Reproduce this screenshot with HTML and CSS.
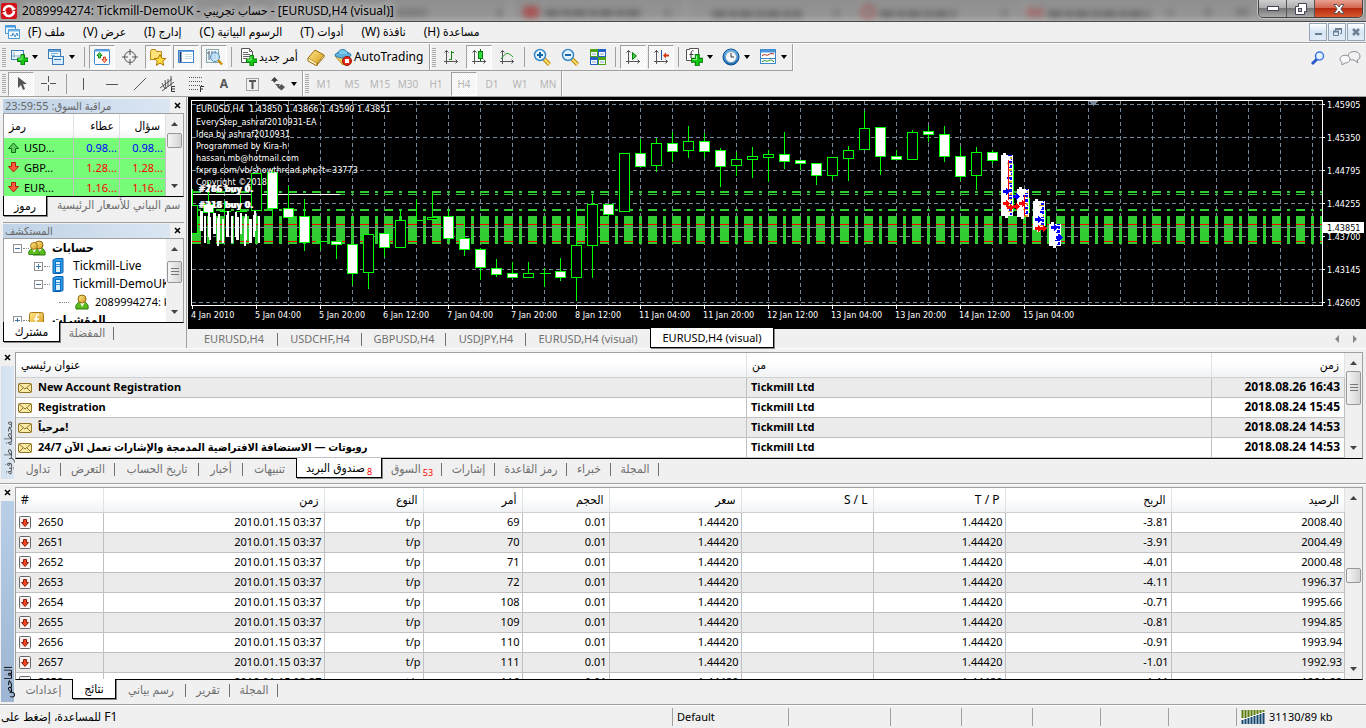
FILE: index.html
```html
<!DOCTYPE html>
<html lang="ar" dir="ltr">
<head>
<meta charset="utf-8">
<title>2089994274: Tickmill-DemoUK</title>
<link rel="stylesheet" href="styles.css">
</head>
<body>
<svg class="defs" width="0" height="0" aria-hidden="true">
  <defs>
    <linearGradient id="gold" x1="0" y1="0" x2="1" y2="1"><stop offset="0" stop-color="#ffe98a"/><stop offset="1" stop-color="#d59a1c"/></linearGradient>
    <linearGradient id="blue" x1="0" y1="0" x2="0" y2="1"><stop offset="0" stop-color="#6fbcf0"/><stop offset="1" stop-color="#1265b4"/></linearGradient>
    <symbol id="plus" viewBox="0 0 11 11"><path d="M4 .5h3.500v3.500h3.500v3.500H7.500v3.500H4V7.500H.5V4H4z" fill="#17c817" stroke="#077a0b"/><path d="M5 1.500v3.500H1.500" fill="none" stroke="#8df58d"/></symbol>
    <symbol id="axes" viewBox="0 0 18 18"><path d="M4.500 2v14M2 13.500h14M2.500 4.500l2-2 2 2M13.500 11.500l2 2-2 2" fill="none" stroke="#555"/></symbol>
    <symbol id="mail" viewBox="0 0 14 10"><rect x=".5" y=".5" width="13" height="9" rx="1" fill="#fbe9a6" stroke="#8f7426"/><path d="M1 1l6 5 6-5M1 9l4-4M13 9L9 5" fill="none" stroke="#8f7426"/></symbol>
    <symbol id="fall" viewBox="0 0 13 14"><rect x=".5" y=".5" width="11" height="12" rx="1" fill="#f6f3f2" stroke="#666"/><path d="M4.500 3.500h3v3h2L6 10.500 2.500 6.500h2z" fill="#f0421c" stroke="#8c1c06"/></symbol>
    <symbol id="down" viewBox="0 0 11 11"><path d="M3.500 .5h4v4h3l-5 5.500-5-5.500h3z" fill="#ff5a3a" stroke="#b71c10"/></symbol>
    <symbol id="up" viewBox="0 0 11 11"><path d="M3.500 10.500h4v-4h3l-5-5.500-5 5.500h3z" fill="#5ccf5c" stroke="#0c6b16"/></symbol>
    <symbol id="server" viewBox="0 0 12 16"><path d="M1 2l3-1.500h7v14L8 15.500H1z" fill="#2b9de8" stroke="#0e5fae"/><rect x="3.500" y="3.500" width="5" height="11" fill="#d8f0ff" stroke="#0e6fc0"/><path d="M4 6.500h4M4 8.500h4" stroke="#2b8ed8"/></symbol>
    <symbol id="user" viewBox="0 0 14 16"><path d="M1 15c-1-5 2-7 6-7s7 2 6 7z" fill="#5cbc1e" stroke="#2c7a08"/><path d="M5 8l2 5 3-5z" fill="#fff"/><circle cx="7" cy="5" r="4" fill="url(#gold)" stroke="#94680c"/></symbol>
    <symbol id="chevup" viewBox="0 0 7 4"><path d="M0 4l3.500-4L7 4z" fill="#444"/></symbol>
    <symbol id="chevdown" viewBox="0 0 7 4"><path d="M0 0l3.500 4L7 0z" fill="#444"/></symbol>
    <symbol id="x" viewBox="0 0 7 7"><path d="M1 1l5 5M6 1L1 6" stroke="#000" stroke-width="1.500"/></symbol>
  </defs>
</svg>

<header class="titlebar">
  <svg class="backdrop" width="100%" height="21" aria-hidden="true">
    <g class="soft">
      <rect x="382" y="9" width="45" height="7" fill="#686868"/>
      <path d="M510 0v20M686 0v20M862 0v20M1026 0v20" stroke="#aaa" stroke-width="3"/>
      <rect x="523" y="6" width="16" height="12" rx="4" fill="#b52a2a"/>
      <path d="M545 13h95M712 14h90M880 14h76M1048 14h102" stroke="#454545" stroke-width="6" stroke-dasharray="14 3 8 2"/>
      <path d="M497 13h5M665 13h5M834 13h5M1002 13h5M1168 13h5M1205 12h6M1236 12h12" stroke="#555" stroke-width="5"/>
      <circle cx="868" cy="12" r="6" fill="none" stroke="#a73232" stroke-width="3"/>
      <path d="M1029 8v9M1035 8v9M1041 8v9" stroke="#b03c3c" stroke-width="4"/>
    </g>
  </svg>
  <svg class="logo" width="16" height="16" viewBox="0 0 16 16"><rect width="16" height="16" rx="2" fill="#d31018"/><path d="M3 8a5 5 0 0 1 9-3M13 8a5 5 0 0 1-9 3" fill="none" stroke="#fff" stroke-width="2.500"/><path d="M10 2l5 4-4 2zM6 14L1 10l4-2z" fill="#fff"/></svg>
  <h1 class="caption">2089994274: Tickmill-DemoUK - حساب تجريبي - [EURUSD,H4 (visual)]</h1>
  <div class="winbtns">
    <button class="wb" aria-label="تصغير"><svg width="12" height="5"><rect x=".5" y=".5" width="11" height="4" fill="#fff" stroke="#445"/></svg></button>
    <button class="wb" aria-label="استعادة"><svg width="12" height="12"><path d="M3.500 .5h8v8h-2v3h-9v-8h3z" fill="#fff" stroke="#445"/><rect x="3.500" y="5.500" width="3" height="3" fill="#bbb" stroke="#445"/></svg></button>
    <button class="wb wclose" aria-label="إغلاق"><svg width="12" height="10"><path d="M1 .5h3l2 2.500 2-2.500h3L7.800 5 11 9.500H8L6 7 4 9.500H1L4.200 5z" fill="#fff" stroke="#555"/></svg></button>
  </div>
</header>

<nav class="menubar">
  <svg width="15" height="15" viewBox="0 0 15 15"><path d="M.5 .5h10v8h-10z" fill="#eaf6ff" stroke="#4a9ad8"/><path d="M1 1.500h9" stroke="#4a9ad8" stroke-width="2"/><path d="M3.500 4.500h11v9h-11z" fill="#f8fcff" stroke="#4a9ad8"/><path d="M4 5.500h10" stroke="#72b6e8" stroke-width="2"/><path d="M5 10l2 1 1-3 2 4 2-4 1 3" fill="none" stroke="#3c8ccc"/></svg>
  <div class="menus">
    <button dir="rtl">ملف (F)</button><button dir="rtl">عرض (V)</button><button dir="rtl">إدارج (I)</button><button dir="rtl">الرسوم البيانية (C)</button><button dir="rtl">أدوات (T)</button><button dir="rtl">نافذة (W)</button><button dir="rtl">مساعدة (H)</button>
  </div>
  <div class="mdi">
    <button aria-label="تصغير"><svg width="7" height="8"><path d="M0 6h7" stroke="#6c8092" stroke-width="2"/></svg></button>
    <button aria-label="استعادة"><svg width="9" height="8"><path d="M2.500 3V1.500h6v4H7M.5 3.500h5v4h-5z" fill="none" stroke="#6c8092"/><path d="M2 1h7M0 3.500h6" stroke="#6c8092" stroke-width="2"/></svg></button>
    <button aria-label="إغلاق"><svg width="8" height="8"><path d="M1 1l6 6M7 1L1 7" stroke="#6c8092" stroke-width="2.500"/></svg></button>
  </div>
</nav>

<div class="tools">
  <div class="toolrow">
    <div class="group">
      <i class="grip"></i>
      <button class="dd" aria-label="رسم جديد"><svg width="18" height="18"><rect x="1.500" y="2.500" width="12" height="9" fill="#f2f9ff" stroke="#3a7cba"/><path d="M4 4v6M2 8h9" stroke="#8ab"/><use href="#plus" x="7" y="6" width="11" height="11"/></svg><i class="arr"></i></button>
      <button class="dd" aria-label="قوالب"><svg width="18" height="18"><rect x="1.500" y="1.500" width="12" height="9" fill="#eaf5ff" stroke="#3a7cba"/><path d="M2 3h11" stroke="#6aa4d8" stroke-width="2"/><path d="M4 5.500h7M4 7.500h4" stroke="#7fb2dc"/><rect x="5.500" y="8.500" width="11" height="8" fill="#d5ecff" stroke="#3a7cba"/><path d="M7 11.500h7" stroke="#3a7cba"/></svg><i class="arr"></i></button>
      <i class="sep"></i>
      <button class="tb on" aria-label="مراقبة السوق"><svg width="18" height="18"><rect x="1.500" y="1.500" width="15" height="15" rx="1" fill="#fff" stroke="#3c86cc"/><path d="M2 2.500h14" stroke="#5aa4e4" stroke-width="2"/><path d="M6.500 4.500l2.500 3H7.500v2.500h-2V7.500H4z" fill="#5ccf5c" stroke="#0c8b16"/><path d="M11.500 14.500l-2.500-3h1.500V9h2v2.500H14z" fill="#ffb08a" stroke="#e0401c"/></svg></button>
      <button class="tb" aria-label="نافذة البيانات"><svg width="18" height="18"><circle cx="9" cy="9" r="5.500" fill="none" stroke="#555"/><path d="M9 1v6M9 11v6M1 9h6M11 9h6" stroke="#555"/></svg></button>
      <button class="tb on" aria-label="المستكشف"><svg width="18" height="18"><path d="M1.500 3.500l1-2h4l1 2h5v8h-11z" fill="#ffe27a" stroke="#b98a12"/><path d="M11 6.500l1.800 3.700 4 .4-3 2.700 1 4-3.800-2.200-3.700 2.200 1-4-3-2.700 4-.4z" fill="#ffdc3c" stroke="#b07806"/></svg></button>
      <button class="tb on" aria-label="محطة طرفية"><svg width="18" height="18"><rect x="1.500" y="2.500" width="15" height="12" fill="#fff" stroke="#3f83c8"/><path d="M2 3.500h14" stroke="#6aace8"/><path d="M3.500 4v10" stroke="#123c78" stroke-width="2"/><path d="M8 6.500h7M8 8.500h7M8 10.500h7" stroke="#cdd"/></svg></button>
      <button class="tb on" aria-label="اختبار"><svg width="18" height="18"><rect x="1.500" y="1.500" width="12" height="13" fill="#eef4f8" stroke="#8aa"/><path d="M4 3v9M2 5h3M7 3v8M10 3v8" stroke="#567"/><circle cx="10" cy="9" r="4.500" fill="#bfe2fa" fill-opacity=".8" stroke="#4b90c4"/><path d="M13 12l4 4.500" stroke="#c8920c" stroke-width="2.500"/></svg></button>
      <i class="sep"></i>
      <button class="tb wide"><svg width="18" height="18"><path d="M2.500 .5h8l3 3v11h-11z" fill="#fff" stroke="#555"/><path d="M10.500 .5v3h3M4 4.500h5M4 6.500h7M4 8.500h7M4 10.500h4" fill="none" stroke="#666"/><use href="#plus" x="7" y="7" width="11" height="11"/></svg><span dir="rtl">أمر جديد</span></button>
      <button class="tb" aria-label="محرر"><svg width="18" height="18"><path d="M1 10l7-8 9 5-7 9z" fill="url(#gold)" stroke="#9c6a08"/><path d="M1 10v3l9 5v-2M10 17l7-8V7" fill="#fff3c2" stroke="#9c6a08"/></svg></button>
      <button class="tb wide"><svg width="18" height="18"><path d="M1 8l8 9 7-9z" fill="url(#gold)" stroke="#b98a12"/><ellipse cx="9" cy="7" rx="8" ry="3" fill="#5fb2dc" stroke="#2a7cae"/><path d="M4 6c0-6 9-6 10 0" fill="#7cc8ec" stroke="#2a7cae"/><circle cx="13" cy="13" r="4.500" fill="#e02a12" stroke="#a01206"/><rect x="11" y="11" width="4" height="4" fill="#fff"/></svg><span>AutoTrading</span></button>
    </div>
    <div class="group">
      <i class="grip"></i>
      <button class="tb" aria-label="أعمدة"><svg width="18" height="18"><use href="#axes" width="18" height="18"/><path d="M9.500 3v9M7 11.500h2.500M9.500 4.500H12" stroke="#128a12"/></svg></button>
      <button class="tb on" aria-label="شموع"><svg width="18" height="18"><use href="#axes" width="18" height="18"/><path d="M10.500 1v12" stroke="#0a6a0a"/><rect x="8.500" y="3.500" width="4" height="7" fill="#2edc3e" stroke="#0a7a0a"/></svg></button>
      <button class="tb" aria-label="خط"><svg width="18" height="18"><use href="#axes" width="18" height="18"/><path d="M3 11c5-7 7-7 12-2" fill="none" stroke="#1a9a1a"/></svg></button>
      <i class="sep"></i>
      <button class="tb" aria-label="تكبير"><svg width="18" height="18"><path d="M11 11l5.500 5.500" stroke="#b8860c" stroke-width="4"/><path d="M11 11l5.500 5.500" stroke="#ffe06a" stroke-width="2"/><circle cx="7" cy="7" r="5.500" fill="#e4f4ff" stroke="#3a88c4" stroke-width="1.500"/><path d="M4 7h6M7 4v6" stroke="#1466a8" stroke-width="2"/></svg></button>
      <button class="tb" aria-label="تصغير"><svg width="18" height="18"><path d="M11 11l5.500 5.500" stroke="#b8860c" stroke-width="4"/><path d="M11 11l5.500 5.500" stroke="#ffe06a" stroke-width="2"/><circle cx="7" cy="7" r="5.500" fill="#e4f4ff" stroke="#3a88c4" stroke-width="1.500"/><path d="M4 7h6" stroke="#1466a8" stroke-width="2"/></svg></button>
      <button class="tb" aria-label="ترتيب"><svg width="18" height="18"><path d="M1 1h8v8H1zM9 9h8v8H9z" fill="#4aa414"/><path d="M9 1h8v8H9zM1 9h8v8H1z" fill="#2462c8"/><path d="M2 4h6v4H2zM10 4h6v4h-6zM2 12h6v4H2zM10 12h6v4h-6z" fill="#f4faff"/><path d="M3 6h4M11 6h4M3 14h4M11 14h4" stroke="#8fa8b8"/></svg></button>
      <i class="sep"></i>
      <button class="tb on" aria-label="تمرير"><svg width="18" height="18"><use href="#axes" width="18" height="18"/><path d="M8.500 4.500v7l4-3.500z" fill="#33d043" stroke="#0a7a0a"/></svg></button>
      <button class="tb on" aria-label="إزاحة"><svg width="18" height="18"><use href="#axes" width="18" height="18"/><path d="M9.500 2v10" stroke="#225c9c"/><path d="M11 7.500l3-3v2h3v2h-3v2z" fill="#d8340c"/></svg></button>
      <i class="sep"></i>
      <button class="dd" aria-label="مؤشرات"><svg width="18" height="18"><path d="M1.500 1.500h3v-1h9v12h-12z" fill="#fff" stroke="#555"/><path d="M8.500 3C6 2 6 4 6 10M4.500 6.500h4" fill="none" stroke="#333"/><use href="#plus" x="6" y="6" width="12" height="12"/></svg><i class="arr"></i></button>
      <button class="dd" aria-label="فترات"><svg width="18" height="18"><circle cx="9" cy="9" r="8" fill="url(#blue)" stroke="#0e4f94"/><circle cx="9" cy="9" r="5.500" fill="#f4f8fc" stroke="#8ab"/><path d="M9 5v4h3" fill="none" stroke="#333"/></svg><i class="arr"></i></button>
      <button class="dd" aria-label="نماذج"><svg width="18" height="18"><rect x="1.500" y="1.500" width="15" height="14" fill="#fff" stroke="#3c86cc"/><path d="M2 3h14" stroke="#4a94d8" stroke-width="3"/><path d="M2 10.500h14" stroke="#3c86cc"/><path d="M3 8c3-3 4 0 6-1s3-2 6-1" fill="none" stroke="#a02010"/><path d="M3 14c3-3 4 0 6-1s3-2 6 1" fill="none" stroke="#128a12"/></svg><i class="arr"></i></button>
    </div>
    <div class="right">
      <svg width="16" height="16"><path d="M2 14l5-5" stroke="#2b58c8" stroke-width="3"/><circle cx="9.500" cy="6" r="4" fill="#e8f4ff" stroke="#3a74e0" stroke-width="1.500"/></svg>
      <svg width="22" height="16"><path d="M9 6c0-6 12-6 12 0 0 3-2 4-3 4l1 3-4-3c-4 0-6-1-6-4z" fill="#f2f2f4" stroke="#909098"/><path d="M1 9c0-5 10-5 10 0 0 3-3 4-5 4l-3 2 0-3c-1 0-2-1-2-3z" fill="#f8f8fa" stroke="#909098"/></svg>
    </div>
  </div>
  <div class="toolrow second">
    <div class="group">
      <i class="grip"></i>
      <button class="tb on" aria-label="مؤشر"><svg width="18" height="18"><path d="M6 2v11l3-3 2 5 2-1-2-5h4z" fill="#555"/></svg></button>
      <button class="tb" aria-label="تقاطع"><svg width="18" height="18"><path d="M8.500 1v6M8.500 10v6M1 8.500h6M10 8.500h6" stroke="#555"/></svg></button>
      <i class="sep"></i>
      <button class="tb" aria-label="خط عمودي"><svg width="18" height="18"><path d="M8.500 3v12" stroke="#555"/></svg></button>
      <button class="tb" aria-label="خط أفقي"><svg width="18" height="18"><path d="M3 9.500h12" stroke="#555"/></svg></button>
      <button class="tb" aria-label="خط اتجاه"><svg width="18" height="18"><path d="M3 15L15 3" stroke="#555"/></svg></button>
      <button class="tb" aria-label="قناة"><svg width="18" height="18"><path d="M1 13L13 4M3 16L15 7M3 8l3 6M6 5l1 9M9 4v8M12 1v10" stroke="#555"/><path d="M16 11.500h-3.500v5H16M12.500 14H16" fill="none" stroke="#333"/></svg></button>
      <button class="tb" aria-label="فيبوناتشي"><svg width="18" height="18"><path d="M2 2.500h13M2 6.500h13M2 10.500h13M2 14.500h9" stroke="#555" stroke-dasharray="1 1"/><path d="M13.500 17v-5.500H17M13.500 14H16" fill="none" stroke="#333"/></svg></button>
      <button class="tb letter">A</button>
      <button class="tb" aria-label="تسمية"><svg width="18" height="18"><rect x="3.500" y="3.500" width="12" height="12" fill="none" stroke="#555" stroke-dasharray="1 1"/><path d="M6 6h7M9.500 6v8" stroke="#555" stroke-width="2"/></svg></button>
      <button class="dd" aria-label="أسهم"><svg width="18" height="18"><path d="M5.500 2L9 5.500 7 6l-1.500 2L4 6 2 5.500z" fill="#444"/><path d="M8 12l3-1.500L12.500 9l1.500 1.500 2 1.500-3.500 3.500zM6 9l3 3 2-3" fill="#555"/></svg><i class="arr"></i></button>
    </div>
    <div class="group frames">
      <i class="grip"></i>
      <button class="tb">M1</button><button class="tb">M5</button><button class="tb">M15</button><button class="tb">M30</button><button class="tb">H1</button><button class="tb on">H4</button><button class="tb">D1</button><button class="tb">W1</button><button class="tb">MN</button>
    </div>
  </div>
</div>

<main class="workspace">
  <aside class="left">
    <section class="pane">
      <div class="pane-title"><h2 dir="rtl">مراقبة السوق: 23:59:55</h2><button class="close" aria-label="إغلاق"><svg width="7" height="7"><use href="#x"/></svg></button></div>
      <div class="pane-body watch">
        <table class="quotes">
          <colgroup><col class="q1"><col class="q2"><col class="q2"></colgroup>
          <thead><tr><th class="start">رمز</th><th>عطاء</th><th>سؤال</th></tr></thead>
          <tbody>
            <tr class="rise"><td><svg width="11" height="11"><use href="#up"/></svg>USD...</td><td>0.98...</td><td>0.98...</td></tr>
            <tr class="drop"><td><svg width="11" height="11"><use href="#down"/></svg>GBP...</td><td>1.28...</td><td>1.28...</td></tr>
            <tr class="drop"><td><svg width="11" height="11"><use href="#down"/></svg>EUR...</td><td>1.16...</td><td>1.16...</td></tr>
          </tbody>
        </table>
        <div class="scroll"><svg width="7" height="4"><use href="#chevup"/></svg><i class="thumb t1"></i><svg class="end" width="7" height="4"><use href="#chevdown"/></svg></div>
      </div>
      <div class="tabs"><button class="tab active w44">رموز</button><button class="tab last clip" dir="rtl">سم البياني للأسعار الرئيسية</button></div>
    </section>
    <section class="pane nav">
      <div class="pane-title"><h2>المستكشف</h2><button class="close" aria-label="إغلاق"><svg width="7" height="7"><use href="#x"/></svg></button></div>
      <div class="pane-body treebox">
        <ul class="tree">
          <li class="l0"><i class="box minus"></i><svg width="18" height="16"><use href="#user" x="4" width="14" height="16"/><use href="#user" x="0" y="1" width="12" height="15"/></svg><b>حسابات</b></li>
          <li class="l1"><i class="box"></i><svg width="12" height="16"><use href="#server"/></svg><span>Tickmill-Live</span></li>
          <li class="l1"><i class="box minus"></i><svg width="12" height="16"><use href="#server"/></svg><span>Tickmill-DemoUK</span></li>
          <li class="l2"><i class="dots"></i><svg width="14" height="16"><use href="#user"/></svg><span>2089994274: k</span></li>
          <li class="l0"><i class="box"></i><svg width="18" height="16"><rect x="1.500" y=".5" width="14" height="14" rx="2" fill="url(#gold)" stroke="#a87a18"/><path d="M11 3c-3-1-3 1-3 9M6 7h5" fill="none" stroke="#fff" stroke-width="1.500"/></svg><b>المؤشرات</b></li>
        </ul>
        <div class="scroll"><svg width="7" height="4"><use href="#chevup"/></svg><i class="thumb t2"></i><svg class="end" width="7" height="4"><use href="#chevdown"/></svg></div>
      </div>
      <div class="tabs"><button class="tab active w57">مشترك</button><button class="tab w54">المفضلة</button></div>
    </section>
  </aside>
  <section class="charts">
    <svg id="chart" viewBox="0 1 1178 231" preserveAspectRatio="xMinYMin meet" role="img" aria-label="EURUSD,H4"></svg>
    <div class="tabs chart-tabs">
      <button class="tab c1">EURUSD,H4</button><button class="tab c2">USDCHF,H4</button><button class="tab c2">GBPUSD,H4</button><button class="tab c3">USDJPY,H4</button><button class="tab c4 nosep">EURUSD,H4 (visual)</button><button class="tab active c4">EURUSD,H4 (visual)</button>
      <div class="nudge"><svg width="22" height="8"><path d="M4 0v8L0 4zM18 0v8l4-4z" fill="#888"/></svg></div>
    </div>
  </section>
</main>

<section class="dock mail">
  <div class="strip"><button class="close" aria-label="إغلاق"><svg width="7" height="7"><use href="#x"/></svg></button><h2 class="vert pale"><span>محطة طرفية</span></h2></div>
  <div class="dock-main">
    <div class="dock-body mailbody">
      <table class="grid letters">
        <colgroup><col><col class="m2"><col class="m3"></colgroup>
        <thead><tr><th>عنوان رئيسي</th><th>من</th><th class="r">زمن</th></tr></thead>
        <tbody>
          <tr><td><svg width="14" height="10"><use href="#mail"/></svg>New Account Registration</td><td>Tickmill Ltd</td><td class="r">2018.08.26 16:43</td></tr>
          <tr><td><svg width="14" height="10"><use href="#mail"/></svg>Registration</td><td>Tickmill Ltd</td><td class="r">2018.08.24 15:45</td></tr>
          <tr><td><svg width="14" height="10"><use href="#mail"/></svg>مرحباً!</td><td>Tickmill Ltd</td><td class="r">2018.08.24 14:53</td></tr>
          <tr><td><svg width="14" height="10"><use href="#mail"/></svg><bdi dir="rtl">روبوتات — الاستضافة الافتراضية المدمجة والإشارات تعمل الآن 24/7</bdi></td><td>Tickmill Ltd</td><td class="r">2018.08.24 14:53</td></tr>
        </tbody>
      </table>
      <div class="scroll"><svg width="7" height="4"><use href="#chevup"/></svg><i class="thumb t3"></i><svg class="end" width="7" height="4"><use href="#chevdown"/></svg></div>
    </div>
    <div class="tabs">
      <button class="tab w46">تداول</button><button class="tab w54">التعرض</button><button class="tab w84">تاريخ الحساب</button><button class="tab w44">أخبار</button><button class="tab w53 nosep">تنبيهات</button><button class="tab active w86">صندوق البريد<sub>8</sub></button><button class="tab w60">السوق<sub>53</sub></button><button class="tab w53">إشارات</button><button class="tab w72">رمز القاعدة</button><button class="tab w44">خبراء</button><button class="tab w48">المجلة</button>
    </div>
  </div>
</section>

<section class="dock tester">
  <div class="strip"><button class="close" aria-label="إغلاق"><svg width="7" height="7"><use href="#x"/></svg></button><h2 class="vert deep"><span>الفاحص</span></h2></div>
  <div class="dock-main">
    <div class="dock-body testbody">
      <table class="grid results">
        <colgroup><col class="r1"><col class="r2"><col class="r3"><col class="r3"><col class="r4"><col class="r5"><col class="r5"><col class="r5"><col class="r6"><col></colgroup>
        <thead><tr><th>#</th><th class="r">زمن</th><th class="r">النوع</th><th class="r">أمر</th><th class="r">الحجم</th><th class="r">سعر</th><th class="r">S / L</th><th class="r">T / P</th><th class="r">الربح</th><th class="r">الرصيد</th></tr></thead>
        <tbody id="results"></tbody>
      </table>
      <div class="scroll"><svg width="7" height="4"><use href="#chevup"/></svg><i class="thumb t4"></i><svg class="end" width="7" height="4"><use href="#chevdown"/></svg></div>
    </div>
    <div class="tabs">
      <button class="tab w57 nosep">إعدادات</button><button class="tab active w44">نتائج</button><button class="tab w70">رسم بياني</button><button class="tab w44">تقرير</button><button class="tab w48">المجلة</button>
    </div>
  </div>
</section>

<footer class="status">
  <span class="cell help"><bdi dir="rtl">F1 للمساعدة، إضغط على</bdi></span>
  <span class="cell profile">Default</span>
  <span class="cell s1"></span><span class="cell s2"></span><span class="cell s2"></span><span class="cell s4"></span><span class="cell s4"></span><span class="cell s4"></span>
  <span class="cell traffic"><svg width="24" height="14"><path d="M1.500 0v8M4.500 0v8M7.500 0v7M10.500 0v6M13.500 0v5M16.500 0v4M19.500 0v3M22.500 0v2" stroke="#5c7f0c" stroke-width="2"/><path d="M1.500 10v4M4.500 9v5M7.500 8v6M10.500 7v7M13.500 6v8M16.500 5v9M19.500 4v10M22.500 3v11" stroke="#174a72" stroke-width="2"/></svg>31130/89 kb</span>
</footer>
<script src="app.js"></script>
</body>
</html>
```
FILE: styles.css
```css
* { box-sizing: border-box; }
body { margin: 0; min-height: 100vh; display: flex; flex-direction: column; background: #f0f0f0; color: #000; font: 12px/16px "Noto Sans", "DejaVu Sans Condensed", "DejaVu Sans", sans-serif; overflow: hidden; }
button { font: inherit; color: inherit; border: 0; padding: 0; margin: 0; background: none; white-space: nowrap; }
h1, h2, ul { margin: 0; padding: 0; font: inherit; list-style: none; }
svg { display: block; flex: none; }
.defs { position: absolute; }

.titlebar { position: relative; display: flex; align-items: center; height: 22px; padding-right: 3px; background: linear-gradient(#8f8f8f, #949494 70%, #a9a9a9); border-bottom: 1px solid #4a4a4a; overflow: hidden; }
.backdrop { position: absolute; inset: 0; }
.soft { filter: blur(3px); opacity: .6; }
.logo { position: relative; margin: 0 5px 0 1px; }
.caption { position: relative; flex: 1; white-space: nowrap; text-shadow: 0 0 8px #fff, 0 0 8px #ddd; }
.winbtns { position: relative; display: flex; align-self: flex-start; height: 18px; border: 1px solid #444; border-top: 0; border-radius: 0 0 5px 5px; box-shadow: 0 0 0 1px #c4c4c4; overflow: hidden; }
.wb { display: flex; justify-content: center; align-items: center; width: 28px; background: linear-gradient(#d0d0d0, #aaa 50%, #777 50%, #aaa); border-right: 1px solid #555; }
.wb.wclose { width: 47px; border-right: 0; background: linear-gradient(#e8a090, #d2604a 50%, #b52a10 50%, #d8582c); }

.menubar { display: flex; align-items: center; height: 21px; padding: 0 1px 0 5px; border-bottom: 1px solid #a0a0a0; font-size: 12px; }
.menus { display: flex; flex: 1; gap: 18px; padding-left: 8px; }
.mdi { display: flex; gap: 1px; }
.mdi button { display: flex; align-items: center; justify-content: center; width: 18px; height: 18px; border: 1px solid #93a6b8; background: linear-gradient(#fff, #d6e6f5 50%, #dfeaf6); }

.tools { border-bottom: 1px solid #a0a0a0; border-top: 1px solid #fff; }
.toolrow { display: flex; height: 27px; }
.toolrow.second { height: 25px; }
.group { display: flex; align-items: center; gap: 2px; padding-right: 3px; border-right: 1px solid #a0a0a0; border-bottom: 1px solid #a0a0a0; box-shadow: 1px 0 #fff; }
.group:nth-child(2) { padding-right: 0; }
.second .group { padding-right: 0; border-bottom: 0; }
.grip { width: 4px; height: 19px; margin: 0 0 0 2px; background: repeating-linear-gradient(#aaa 0 1px, #f0f0f0 1px 2px); }
.sep { width: 1px; height: 20px; margin: 0 2px; background: #a0a0a0; }
.tb { display: flex; align-items: center; justify-content: center; width: 26px; height: 24px; border: 1px solid transparent; }
.tb.wide { width: auto; gap: 2px; padding: 0 2px; }
.tb.on { border-color: #a0a0a0 #fff #fff #a0a0a0; background: repeating-conic-gradient(#fff 0 25%, #f0f0f0 0 50%) 0 0 / 2px 2px; }
.dd { display: flex; align-items: center; gap: 4px; width: 35px; padding-left: 2px; }
.arr { border: 3px solid transparent; border-top: 4px solid #000; border-bottom: 0; }
.frames { color: #b4b4b4; font-size: 10px; }
.letter { color: #555; font-weight: 700; font-size: 12px; }
.right { display: flex; align-items: center; gap: 13px; margin-left: auto; padding-right: 5px; }

.workspace { display: flex; height: 251px; }
.left { display: flex; flex-direction: column; width: 187px; padding: 1px 2px 0 3px; border-right: 1px solid #a0a0a0; }
.pane { display: flex; flex-direction: column; height: 125px; border-bottom: 1px solid #a0a0a0; }
.pane-title { display: flex; align-items: center; height: 15px; color: #666; font-size: 11px; }
.pane-title h2 { flex: 1; text-align: left; padding: 0 2px; line-height: 14px; background: linear-gradient(90deg, #bfd2e6, #dbe6f2); }
.close { display: flex; justify-content: center; width: 14px; }
.pane-body { display: flex; border: 1px solid #a0a0a0; border-bottom-color: #000; background: #fff; overflow: hidden; }
.watch { height: 84px; }
.quotes { flex: 1; table-layout: fixed; width: 100%; border-collapse: collapse; }
.quotes .q1 { width: 69px; }
.quotes .q2 { width: 46px; }
.quotes th { height: 24px; padding: 0 5px; text-align: right; font-weight: 400; border-right: 1px solid #e0e3e6; background: linear-gradient(#fff 60%, #f2f3f5); }
.quotes th.start { text-align: left; }
.quotes td { height: 20px; padding: 0 2px; text-align: right; font-size: 11px; white-space: nowrap; background: #76fc76; border-right: 1px solid #c0c0c0; border-bottom: 1px solid #c0c0c0; overflow: hidden; }
.quotes td:first-child { text-align: left; color: #000; padding-left: 4px; }
.quotes td svg { display: inline-block; vertical-align: -1px; margin-right: 5px; }
.rise { color: #00f; }
.drop { color: #f00; }
.scroll { position: relative; display: flex; flex-direction: column; align-items: center; width: 17px; padding: 8px 0; background: #f0f0f0; }
.scroll .end { margin-top: auto; }
.thumb { width: 15px; border: 1px solid #979797; border-radius: 2px; background: linear-gradient(90deg, #f5f5f5, #d4d4d6); }
.t1 { height: 15px; margin-top: 7px; }
.t2 { height: 22px; margin-top: 10px; }
.t3 { height: 34px; margin-top: 6px; }
.t4 { height: 15px; margin-top: 68px; }
.t2, .t3 { background: repeating-linear-gradient(#777 0 1px, transparent 1px 3px) center / 8px 8px no-repeat, linear-gradient(90deg, #f5f5f5, #d4d4d6); }
.tabs { display: flex; height: 20px; }
.tab { position: relative; height: 19px; text-align: center; color: #707070; overflow: visible; }
.tab::after { content: ""; position: absolute; right: 0; top: 4px; width: 1px; height: 13px; background: #707070; }
.tab.active::after, .tab.last::after, .tab.nosep::after { content: none; }
.tab.active { color: #000; background: #fff; border: 1px solid #000; border-top: 0; margin-top: -1px; height: 20px; box-shadow: 1px 1px #888; }
.tab sub { display: inline-block; unicode-bidi: isolate; font-size: 9px; line-height: 9px; color: #f00; vertical-align: -3px; margin-left: 2px; }
.tab.clip { flex: 1; min-width: 0; overflow: hidden; display: flex; justify-content: flex-end; padding-left: 10px; }
.w44 { width: 44px; } .w46 { width: 46px; } .w48 { width: 48px; } .w53 { width: 53px; } .w54 { width: 54px; } .w57 { width: 57px; } .w60 { width: 60px; } .w70 { width: 70px; } .w72 { width: 72px; } .w84 { width: 84px; } .w86 { width: 86px; }
.nav { border-bottom: 0; }
.treebox { height: 85px; }
.tree { flex: 1; overflow: hidden; white-space: nowrap; }
.tree li { display: flex; align-items: center; height: 18px; gap: 6px; }
.tree .l0 { padding-left: 9px; }
.tree .l1 { padding-left: 30px; gap: 9px; }
.tree .l2 { padding-left: 55px; font-size: 11px; }
.box { position: relative; flex: none; width: 9px; height: 9px; border: 1px solid #919191; background: linear-gradient(#47a, #47a) center / 5px 1px no-repeat, linear-gradient(#47a, #47a) center / 1px 5px no-repeat, #fff; }
.box.minus { background: linear-gradient(#47a, #47a) center / 5px 1px no-repeat, #fff; }
.box::after { content: ""; position: absolute; left: 9px; top: 3px; width: 6px; border-top: 1px dotted #888; }
.dots { flex: none; width: 10px; border-top: 1px dotted #888; }

.charts { flex: 1; min-width: 0; background: #000; margin-left: 1px; }
#chart { width: 100%; font: 9px "DejaVu Sans Condensed", "DejaVu Sans", sans-serif; shape-rendering: crispEdges; }
#chart text { white-space: pre; }
.chart-tabs { background: #f0f0f0; border-top: 1px solid #000; padding-left: 2px; font-size: 11px; }
.c1 { width: 88px; } .c2 { width: 84px; } .c3 { width: 80px; } .c4 { width: 124px; }
.nudge { margin: 6px 9px 0 auto; }

.dock { display: flex; border-top: 1px solid #fff; }
.mail { height: 135px; padding-top: 3px; }
.tester { height: 222px; padding-top: 3px; border-top: 1px solid #a0a0a0; border-bottom: 1px solid #a0a0a0; box-shadow: inset 0 1px #fff; }
.strip { display: flex; flex-direction: column; width: 15px; padding: 0 1px; }
.strip .close { width: 12px; height: 14px; padding-top: 2px; }
.vert { flex: 1; display: flex; writing-mode: vertical-rl; transform: rotate(180deg); color: #555; font-size: 11px; line-height: 13px; justify-content: flex-start; padding-top: 4px; }
.pale { background: linear-gradient(90deg, #dbe6f2, #d2e0ee); margin-bottom: 4px; }
.deep { background: linear-gradient(#9db5d2, #b9cfe8); margin-bottom: 2px; color: #000; }
.dock-main { flex: 1; min-width: 0; padding-right: 3px; }
.dock-body { display: flex; background: #fff; border: 1px solid #a0a0a0; border-bottom-color: #000; overflow: hidden; }
.mailbody { height: 107px; }
.testbody { height: 193px; }
.grid { flex: 1; width: 100%; table-layout: fixed; border-collapse: collapse; align-self: flex-start; }
.grid th { height: 24px; padding: 0 5px; text-align: left; font-weight: 400; border-right: 1px solid #e0e3e6; border-bottom: 1px solid #d0d0d0; background: linear-gradient(#fff 40%, #f0f2f4); }
.grid td { height: 20px; padding: 0 2px; font-size: 11px; white-space: nowrap; border-right: 1px solid #c0c0c0; border-bottom: 1px solid #c0c0c0; }
.grid .r { text-align: right; }
.grid td svg { display: inline-block; vertical-align: middle; }
.letters td { font-weight: 700; padding: 0 4px; }
.letters td.r { font-size: 12px; }
.letters td:first-child { padding-left: 2px; }
.letters td svg { margin-right: 6px; }
.letters tbody tr:nth-child(odd), .results tbody tr:nth-child(even) { background: #ebebeb; }
.results td svg { margin: 0 6px 0 1px; }
.m2 { width: 465px; } .m3 { width: 133px; }
.r1 { width: 87px; } .r2 { width: 221px; } .r3 { width: 99px; } .r4 { width: 87px; } .r5 { width: 132px; } .r6 { width: 166px; }

.status { display: flex; flex: 1; align-items: center; border-top: 1px solid #fff; font-size: 11px; }
.cell { display: flex; align-items: center; height: 18px; padding: 0 4px; border-left: 1px solid #a0a0a0; }
.help { flex: 1; border-left: 0; padding-left: 1px; font-size: 12px; }
.profile { width: 116px; }
.s1 { width: 102px; } .s2 { width: 71px; } .s4 { width: 68px; }
.traffic { width: 130px; gap: 4px; }
```
FILE: app.js
```js
const NS = "http://www.w3.org/2000/svg";
const chart = document.getElementById("chart");

function add(name, attrs, text) {
  const el = document.createElementNS(NS, name);
  for (const key in attrs) el.setAttribute(key, attrs[key]);
  if (text) el.textContent = text;
  chart.appendChild(el);
  return el;
}
function hline(x1, x2, y, color, dash, width) {
  add("path", { d: `M${x1} ${y}H${x2}`, stroke: color, "stroke-width": width || 1, "stroke-dasharray": dash || "none" });
}
function label(x, y, text, extra) {
  add("text", Object.assign({ x, y, fill: "#fff" }, extra), text);
}

const SLATE = "#778899", LIME = "#00ff00", GREEN = "#32cd32";
const TOP = 5, BOTTOM = 209, RIGHT = 1134;

add("rect", { y: 1, width: 1178, height: 231, fill: "#000" });
for (let x = 36; x < RIGHT; x += 32) {
  add("path", { d: `M${x + .5} ${TOP}V${BOTTOM}`, stroke: SLATE, "stroke-dasharray": "4 3" });
}
["1.45905", "1.45350", "1.44795", "1.44255", "1.43700", "1.43145", "1.42605"].forEach((price, i) => {
  const y = 8.5 + i * 33;
  hline(4, RIGHT, y, SLATE, "4 3");
  hline(RIGHT, RIGHT + 3, y, "#fff");
  label(1139, y + 3, price);
});

// pending order levels
hline(4, RIGHT, 96, GREEN, "9 6 3 6", 2);
hline(4, RIGHT, 98.5, GREEN, "9 6 3 6");
hline(4, RIGHT, 114, GREEN, "9 6 3 6", 2);
hline(4, RIGHT, 134, GREEN, "9 6 3 6", 28);
hline(4, RIGHT, 128.5, "#ff0000", "9 6 3 6");
hline(4, RIGHT, 145.5, "#ff0000", "9 15");
hline(4, RIGHT, 131.5, SLATE);
hline(4, 152, 98.5, "#fff");

// [filled, body top, body bottom, wick top, wick bottom], 16 px apart
const candles = [
  [0,109,137,93,137],[1,108,116,86,120],[0,115,115,105,118],[0,115,115,99,116],[0,77,114,77,114],
  [1,76,112,72,120],[1,112,121,90,121],[1,120,146,103,155],[0,145,145,145,154],[1,145,148,145,163],
  [1,148,177,148,189],[0,138,176,138,193],[1,137,151,137,161],[0,124,151,113,152],[0,124,124,103,124],
  [0,121,123,96,123],[1,120,142,113,142],[1,142,153,123,160],[1,153,171,152,184],[1,172,178,163,181],
  [1,177,181,166,181],[0,177,181,166,182],[0,177,177,172,191],[1,175,181,162,185],[0,149,181,113,205],
  [0,108,149,98,182],[1,108,118,108,120],[0,57,115,57,115],[1,57,70,43,70],[0,47,69,42,76],
  [1,47,55,36,66],[0,45,54,30,62],[1,45,55,37,62],[1,54,70,52,91],[0,63,69,56,80],
  [0,60,63,51,82],[0,58,61,54,86],[1,58,65,36,73],[1,64,67,64,74],[1,67,79,67,89],
  [0,61,79,61,84],[0,54,62,50,85],[0,32,53,15,53],[1,31,60,31,79],[1,60,63,54,64],
  [0,36,63,34,63],[1,35,38,30,46],[1,38,60,30,66],[1,60,80,51,85],[0,56,79,51,94],
  [1,56,64,54,68]
];
candles.forEach(([filled, top, bottom, high, low], i) => {
  const x = 4 + i * 16 + .5;
  add("path", { d: `M${x} ${high}V${low}`, stroke: LIME });
  const left = Math.max(x - 5, 3.5);
  if (top === bottom) hline(left, x + 6, top + .5, LIME);
  else add("rect", { x: left, y: top + .5, width: x + 5 - left, height: bottom - top, fill: filled ? "#fff" : "#000", stroke: LIME });
});

// trade marks on the latest bars
[[814,59,122],[830,93,123],[846,105,136],[862,128,152]].forEach(([x, top, bottom], n) => {
  add("path", { d: `M${x - 1} ${top}h2v-2h3v2h7V${bottom - 2}h-5v2h-3v-2h-4z`, fill: "#fff" });
  for (let y = top, k = 0; y < bottom - 3; y += 2, k++) {
    const reach = [4, 2, 1, 3, 5, 2, 3][(k + n) % 7];
    const color = n < 2 && k % 3 === 1 || n === 2 && k % 5 === 2 ? "#daa520" : "#0000ff";
    add("rect", { x: x + 10 - reach, y, width: reach, height: k % 2 + 1, fill: color });
  }
  if (n < 3) add("path", { d: `M${x + 11.5} ${top + 9}V${bottom - 6}`, stroke: LIME });
});
add("path", { d: "M820.5 64V104M836.5 99V120", stroke: "#f00" });
const arrow = (x, y, color) => add("path", { d: `M${x} ${y}h3v-2l4 3-4 4v-2h-3z`, fill: color });
[[815,94,"#00f"],[825,99,"#00f"],[815,106,"#f00"],[819,110,"#f00"],[825,109,"#f00"],[831,106,"#f00"],[847,122,"#00f"],[847,131,"#f00"],[852,131,"#f00"],[863,130,"#00f"],[868,140,"#00f"]].forEach(a => arrow(...a));

// overlapping order captions at the left edge
for (let i = 0; i < 20; i++) {
  const x = 12 + i * 3 + (i % 3);
  add("rect", { x, y: 115 + (i * 5) % 9, width: i % 4 ? 2 : 3, height: 20 + (i * 7) % 9, fill: "#fff" });
}
const bold = { "font-weight": 700 };
label(10, 96, "#286 buy 0.", bold);
label(11, 96, "#766 buy 0.", bold);
label(10, 112, "#318 buy 0.", bold);
label(11, 112, "#216 buy 0.", bold);

label(8, 16, "EURUSD,H4  1.43850 1.43866 1.43590 1.43851");
["EveryStep_ashraf2010931-EA", "Idea by ashraf2010931", "Programmed by Kira-h", "hassan.mb@hotmail.com", "fxprg.com/vb/showthread.php?t=33773", "Copyright ©2018"]
  .forEach((text, i) => label(8, 29 + i * 12, text));

// frame, shift mark, current price, time axis
add("path", { d: `M3.500 ${BOTTOM + .5}V4.500H${RIGHT + .5}V${BOTTOM + .5}H3`, fill: "none", stroke: "#fff" });
add("path", { d: "M900 5h10l-5 5z", fill: SLATE });
add("rect", { x: 1135, y: 126, width: 41, height: 11, fill: "#fff" });
label(1139, 135, "1.43851", { fill: "#000" });
["4 Jan 2010", "5 Jan 04:00", "5 Jan 20:00", "6 Jan 12:00", "7 Jan 04:00", "7 Jan 20:00", "8 Jan 12:00", "11 Jan 04:00", "11 Jan 20:00", "12 Jan 12:00", "13 Jan 04:00", "13 Jan 20:00", "14 Jan 12:00", "15 Jan 04:00"]
  .forEach((text, i) => {
    add("path", { d: `M${4.5 + i * 64} ${BOTTOM + 1}v3`, stroke: "#fff" });
    label(3 + i * 64, 222, text);
  });

const trades = [
  [69, "-3.81", "2008.40"], [70, "-3.91", "2004.49"], [71, "-4.01", "2000.48"], [72, "-4.11", "1996.37"],
  [108, "-0.71", "1995.66"], [109, "-0.81", "1994.85"], [110, "-0.91", "1993.94"], [111, "-1.01", "1992.93"],
  [116, "-1.11", "1991.82"]
];
document.getElementById("results").innerHTML = trades.map(([order, profit, balance], i) => {
  const cells = ["2010.01.15 03:37", "t/p", order, "0.01", "1.44420", "", "1.44420", profit, balance];
  return `<tr><td><svg width="13" height="14"><use href="#fall"/></svg>${2650 + i}</td>` +
    cells.map(c => `<td class="r">${c}</td>`).join("") + "</tr>";
}).join("");
```
